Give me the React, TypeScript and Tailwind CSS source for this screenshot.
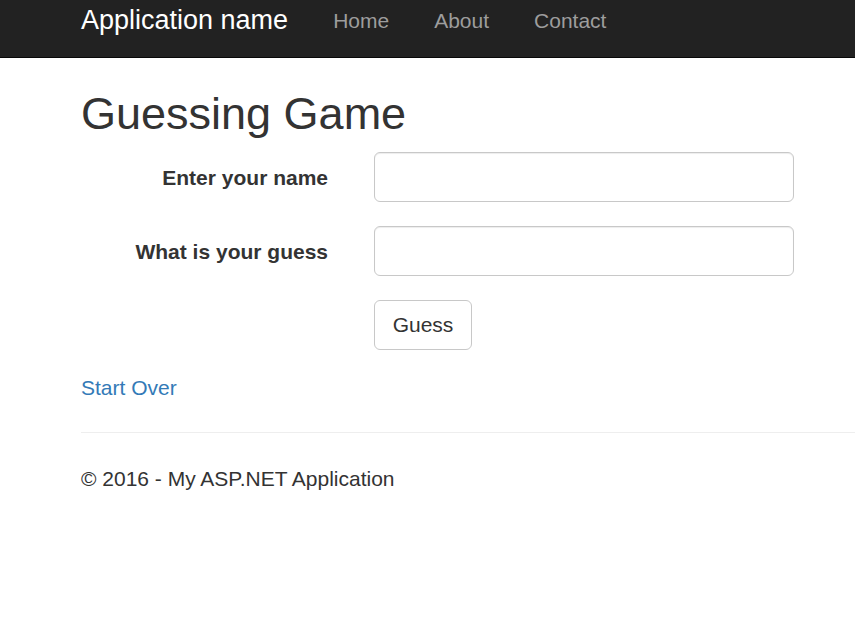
export default function App() {
  const font = { fontFamily: '"Liberation Sans", Arial, sans-serif' };

  return (
    <div className="min-h-[637px] bg-white text-[#333]" style={font}>
      {/* Top navbar */}
      <nav className="h-[58px] bg-[#222] border-b border-[#080808]">
        <div className="flex h-[40px] items-center pl-[81px]">
          <a href="#" className="text-[27px] leading-none text-white">
            Application name
          </a>
          <ul className="ml-[45px] flex items-center gap-[45px] text-[21px] leading-none text-[#9d9d9d]">
            <li>
              <a href="#">Home</a>
            </li>
            <li>
              <a href="#">About</a>
            </li>
            <li>
              <a href="#">Contact</a>
            </li>
          </ul>
        </div>
      </nav>

      <main className="pl-[81px]">
        <h2 className="mt-[31px] text-[45px] font-normal leading-[1.1]">
          Guessing Game
        </h2>

        <form className="mt-[13px] flex flex-col gap-[24px]">
          <div className="flex items-center">
            <label className="w-[247px] pt-[3px] text-right text-[21px] font-bold">
              Enter your name
            </label>
            <input
              type="text"
              className="ml-[46px] h-[50px] w-[420px] rounded-[6px] border border-[#c8c8c8] shadow-[inset_0_1px_1px_rgba(0,0,0,0.075)] outline-none"
            />
          </div>
          <div className="flex items-center">
            <label className="w-[247px] pt-[3px] text-right text-[21px] font-bold">
              What is your guess
            </label>
            <input
              type="text"
              className="ml-[46px] h-[50px] w-[420px] rounded-[6px] border border-[#c8c8c8] shadow-[inset_0_1px_1px_rgba(0,0,0,0.075)] outline-none"
            />
          </div>
          <div className="flex">
            <button
              type="button"
              className="ml-[293px] h-[50px] w-[98px] rounded-[6px] border border-[#c8c8c8] bg-white text-[21px] text-[#333]"
            >
              Guess
            </button>
          </div>
        </form>

        <a
          href="#"
          className="mt-[24px] block text-[21px] leading-[28.6px] text-[#337ab7]"
        >
          Start Over
        </a>

        <hr className="mt-[30px] border-t border-[#eee]" />

        <footer className="mt-[32px] text-[21px] leading-[28.6px]">
          © 2016 - My ASP.NET Application
        </footer>
      </main>
    </div>
  );
}
